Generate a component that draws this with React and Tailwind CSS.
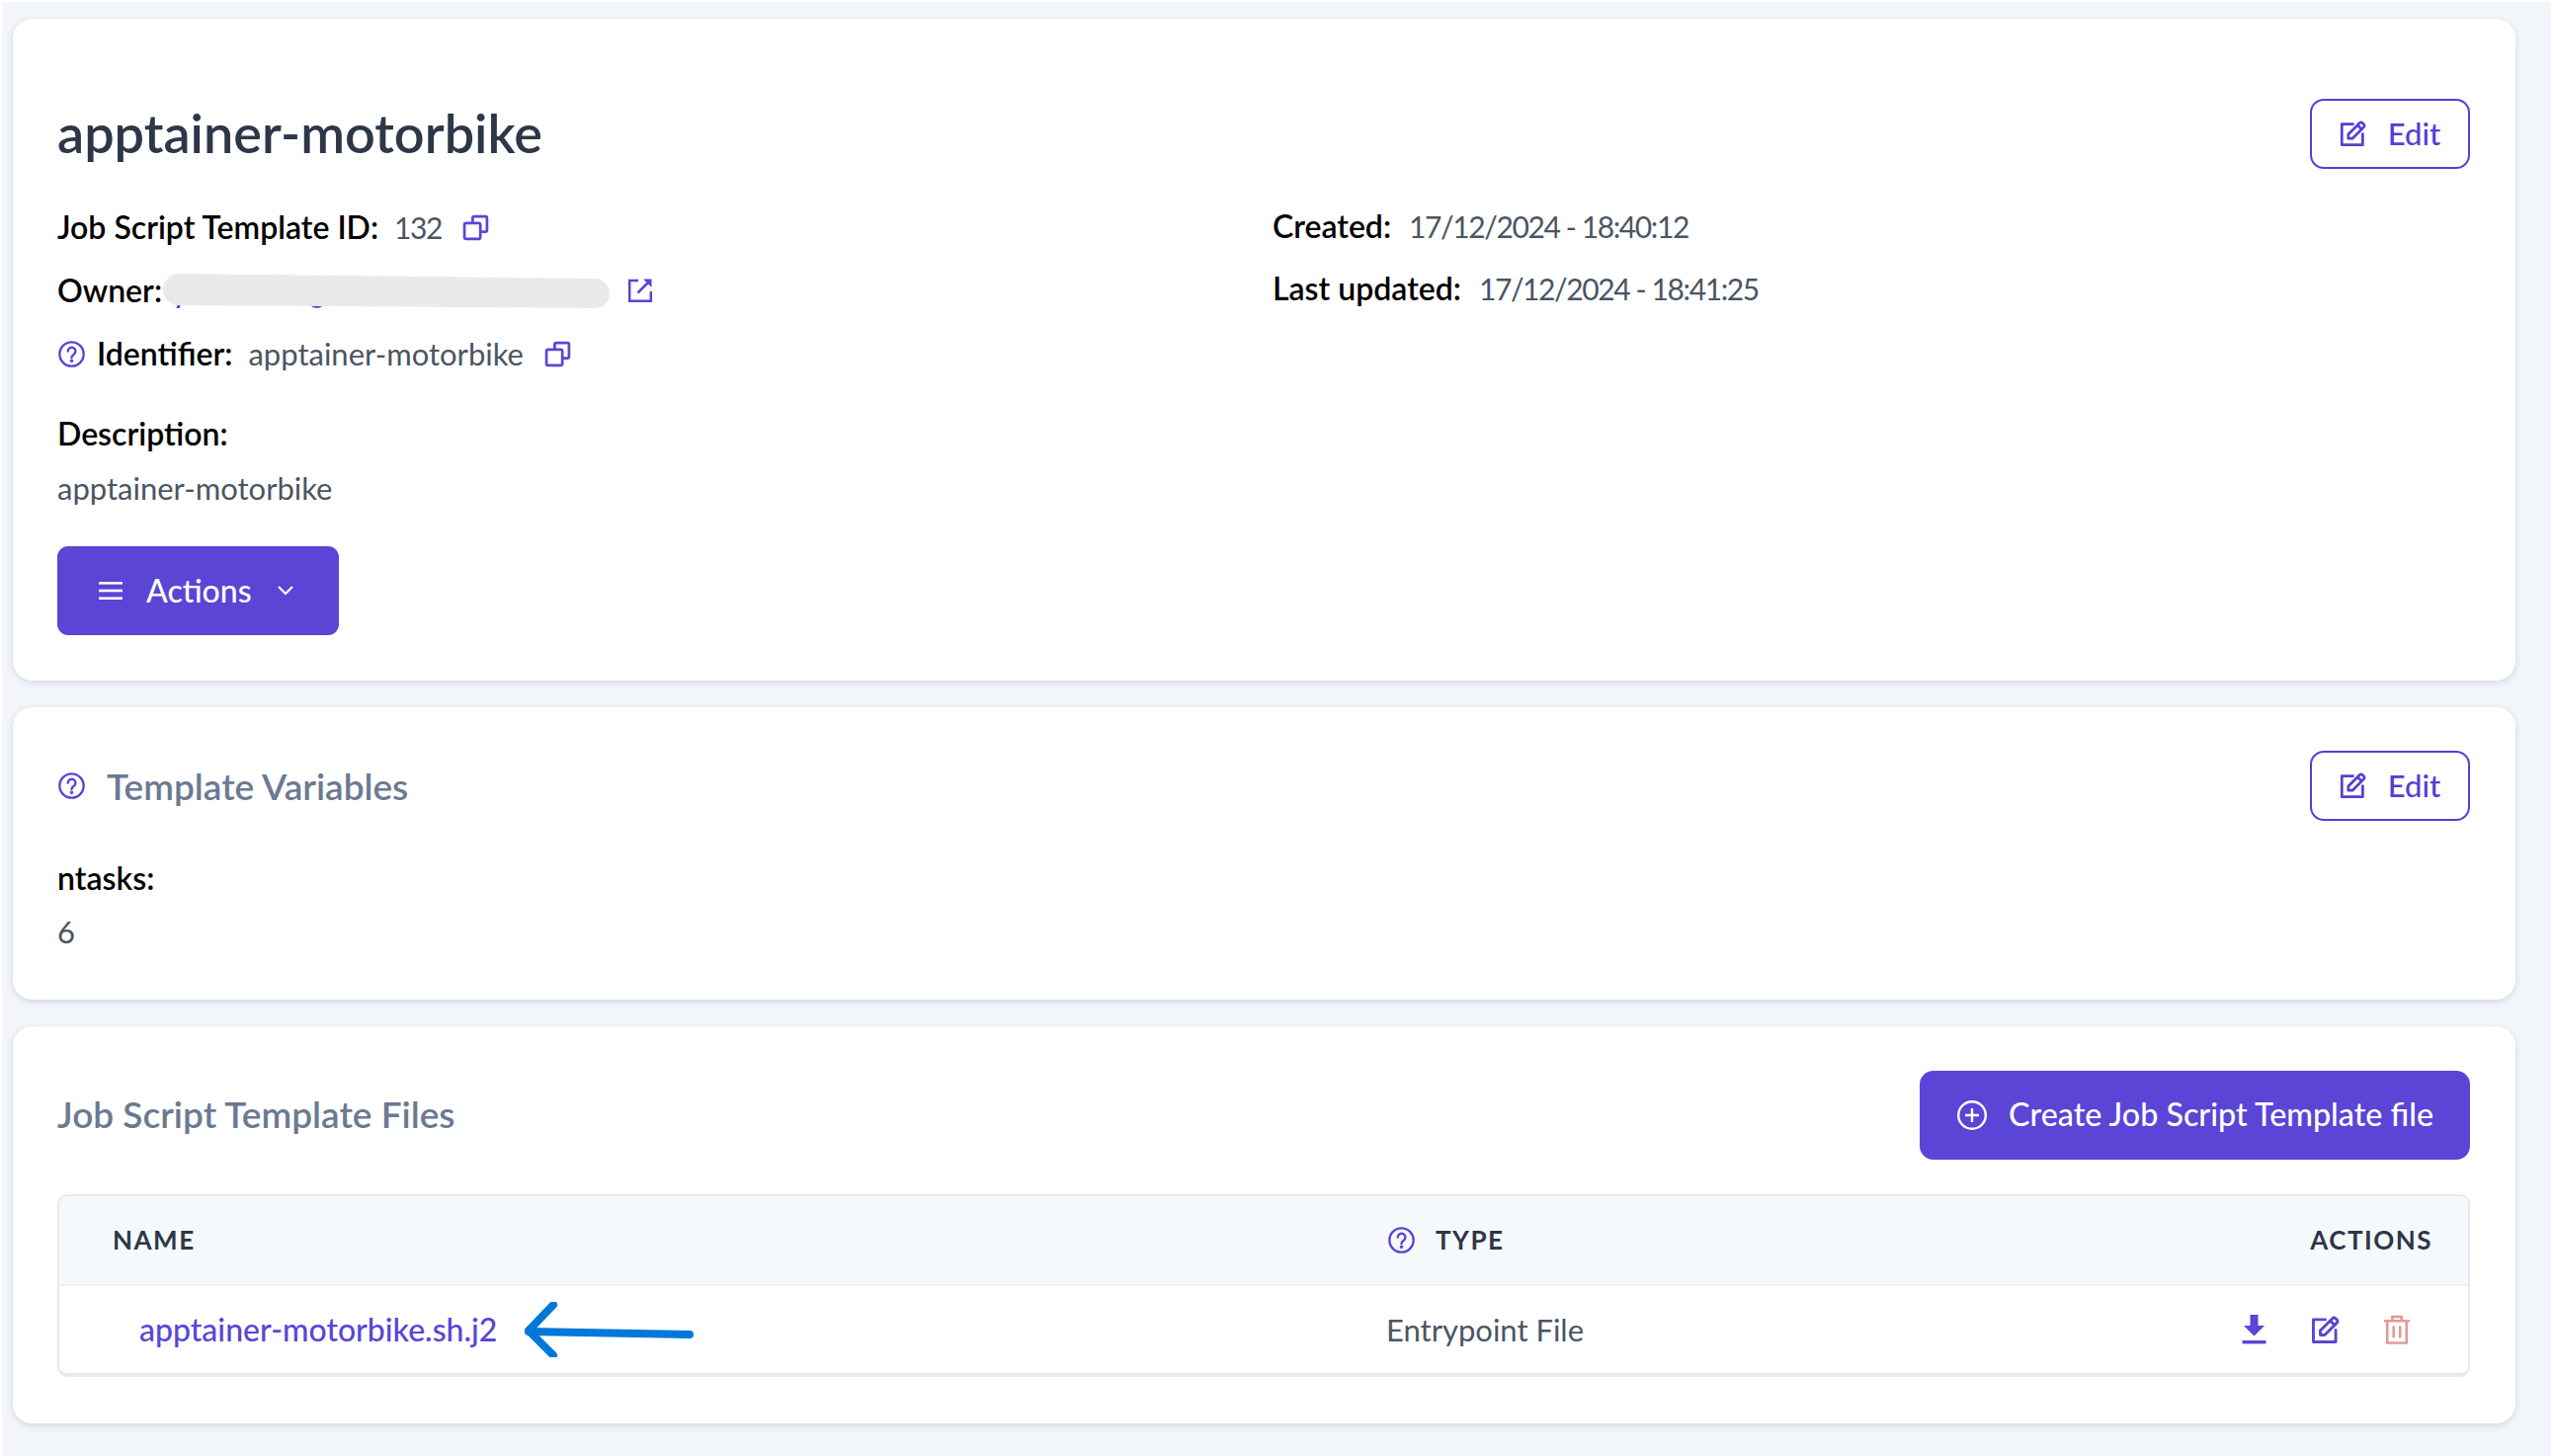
import React from 'react';

const font = { fontFamily: '"Lato", "Liberation Sans", sans-serif' };

function CopyIcon({ className }) {
  return (
    <svg viewBox="0 0 26 26" fill="none" stroke="currentColor" strokeWidth="2.6" strokeLinejoin="round" className={className}>
      <path d="M10 8V3.5A1.5 1.5 0 0 1 11.5 2h11A1.5 1.5 0 0 1 24 3.5v12a1.5 1.5 0 0 1-1.5 1.5H18" />
      <rect x="2" y="8.5" width="15.5" height="15.5" rx="1.5" />
    </svg>
  );
}

function HelpIcon({ className }) {
  return (
    <svg viewBox="0 0 26 26" fill="none" stroke="currentColor" strokeWidth="2.3" strokeLinecap="round" className={className}>
      <circle cx="13" cy="13" r="11.7" />
      <path d="M9.4 10.2a3.7 3.7 0 1 1 5.6 3.2c-1.3.8-2 1.4-2 2.9" />
      <circle cx="13" cy="19.6" r="0.6" fill="currentColor" />
    </svg>
  );
}

function EditIcon({ className }) {
  return (
    <svg viewBox="0 0 26 26" fill="none" stroke="currentColor" strokeWidth="2.6" strokeLinejoin="round" strokeLinecap="round" className={className}>
      <path d="M13 3.5H2.2v20.3h20.3V13" />
      <path d="M8.5 17.5v-4L19.6 2.4a1.9 1.9 0 0 1 2.7 0l1.3 1.3a1.9 1.9 0 0 1 0 2.7L12.5 17.5z" />
      <path d="M17.6 4.6l3.8 3.8" />
    </svg>
  );
}

function ExternalIcon({ className }) {
  return (
    <svg viewBox="0 0 26 26" fill="none" stroke="currentColor" strokeWidth="2.5" className={className}>
      <path d="M11 3H2.2v20.8H23.8V14" />
      <path d="M10.5 15.5L23 3" />
      <path d="M16 1.5h8.5V10" fill="currentColor" stroke="none" />
    </svg>
  );
}

function DownloadIcon({ className }) {
  return (
    <svg viewBox="0 0 24 30" fill="currentColor" className={className}>
      <path d="M8 0h8v11h6.5L12 21.5 1.5 11H8z" />
      <rect x="0" y="26" width="24" height="3.4" />
    </svg>
  );
}

function TrashIcon({ className }) {
  return (
    <svg viewBox="0 0 28 32" fill="none" stroke="currentColor" strokeWidth="2.8" className={className}>
      <path d="M0 6.5h28" />
      <path d="M9 6V2h10v4" />
      <path d="M3.5 6.5V30.5h21V6.5" />
      <path d="M10.5 12v13M17.5 12v13" />
    </svg>
  );
}

function EditButton() {
  return (
    <button className="flex h-[71px] w-[162px] items-center justify-center gap-[22px] rounded-[14px] border-2 border-[#5240d4] bg-white text-[31px] font-medium text-[#5240d4]">
      <EditIcon className="size-[27px]" />
      Edit
    </button>
  );
}

function Card({ className, children }) {
  return (
    <section className={`rounded-[20px] bg-white pl-[45px] pr-[46px] shadow-[0_2px_6px_rgba(100,116,139,0.22)] ${className}`}>
      {children}
    </section>
  );
}

function Field({ label, children }) {
  return (
    <div className="flex h-[64px] items-center">
      <span className="text-[32px] font-semibold text-black">{label}</span>
      {children}
    </div>
  );
}

export default function App() {
  return (
    <div className="min-h-[1474px] bg-white pl-[2px] pr-[2px] pt-[2px] text-[31px] text-[#4b5563]" style={font}>
      <div className="flex min-h-[1472px] flex-col gap-[27px] bg-[#f2f5fa] pl-[11px] pr-[36px] pt-[17px]">
        {/* details card */}
        <Card className="h-[670px] pt-[81px]">
          <div className="flex items-start justify-between">
            <h1 className="mt-[-1px] text-[54px] font-semibold leading-[72px] text-[#2d3748]">apptainer-motorbike</h1>
            <EditButton />
          </div>
          <div className="mt-[27px] grid grid-cols-2">
            <div>
              <Field label="Job Script Template ID:">
                <span className="ml-[16px] text-[30px] tracking-[-1.5px]">132</span>
                <CopyIcon className="ml-[21px] size-[27px] text-[#5a45d6]" />
              </Field>
              <Field label="Owner:">
                <span className="w-0" />
                <svg viewBox="0 0 453 36" className="ml-[1px] h-[36px] w-[453px]">
                  <path d="M16 32c0 3-1 5-3 6M150 32c2 3 8 3 10 1" fill="none" stroke="#5a45d6" strokeWidth="3" />
                  <path d="M16 1L437 6A15 15 0 0 1 437 36L16 33A16 16 0 0 1 16 1Z" fill="#eaeaea" />
                </svg>
                <ExternalIcon className="ml-[17px] size-[26px] text-[#5a45d6]" />
              </Field>
              <div className="flex h-[64px] items-center">
                <HelpIcon className="ml-[1px] size-[27px] text-[#5a45d6]" />
                <span className="ml-[12px] text-[32px] font-semibold text-black">Identifier:</span>
                <span className="ml-[16px]">apptainer-motorbike</span>
                <CopyIcon className="ml-[21px] size-[27px] text-[#5a45d6]" />
              </div>
            </div>
            <div className="-mt-[1px] pl-[9px]">
              <Field label="Created:">
                <span className="ml-[18px] text-[30px] tracking-[-1.4px]">17/12/2024 - 18:40:12</span>
              </Field>
              <div className="-mt-[1px]">
                <Field label="Last updated:">
                  <span className="ml-[18px] text-[30px] tracking-[-1.4px]">17/12/2024 - 18:41:25</span>
                </Field>
              </div>
            </div>
          </div>
          <div className="mt-[31px] text-[32px] font-semibold leading-[36px] text-black">Description:</div>
          <div className="mt-[19px] leading-[36px]">apptainer-motorbike</div>
          <button className="mt-[41px] flex h-[90px] w-[285px] items-center rounded-[11px] bg-[#5a45d6] pl-[42px] text-[32px] font-medium text-white">
            <svg viewBox="0 0 24 18" className="h-[18px] w-[24px]" fill="currentColor">
              <rect width="24" height="2.6" />
              <rect y="7.7" width="24" height="2.6" />
              <rect y="15.4" width="24" height="2.6" />
            </svg>
            <span className="ml-[24px]">Actions</span>
            <svg viewBox="0 0 16 10" fill="none" stroke="currentColor" strokeWidth="2.2" className="ml-[26px] h-[10px] w-[16px]">
              <path d="M1 1l7 7 7-7" />
            </svg>
          </button>
        </Card>

        {/* template variables */}
        <Card className="h-[296px] pt-[44px]">
          <div className="flex items-center justify-between">
            <div className="flex items-center">
              <HelpIcon className="ml-[1px] size-[27px] text-[#5a45d6]" />
              <h2 className="ml-[22px] text-[37px] font-semibold text-[#6b7a90]">Template Variables</h2>
            </div>
            <EditButton />
          </div>
          <div className="mt-[40px] text-[32px] font-semibold leading-[36px] text-black">ntasks:</div>
          <div className="mt-[18px] leading-[36px]">6</div>
        </Card>

        {/* files table */}
        <Card className="h-[402px] pt-[45px]">
          <div className="flex items-center justify-between">
            <h2 className="-mt-[2px] text-[37px] font-semibold text-[#6b7a90]">Job Script Template Files</h2>
            <button className="flex h-[90px] w-[557px] items-center rounded-[14px] bg-[#5a45d6] pl-[38px] text-[32.3px] font-medium text-white">
              <svg viewBox="0 0 30 30" fill="none" stroke="currentColor" strokeWidth="2.4" className="size-[30px]">
                <circle cx="15" cy="15" r="13.8" />
                <path d="M15 8v14M8 15h14" />
              </svg>
              <span className="-mt-[2px] ml-[22px]">Create Job Script Template file</span>
            </button>
          </div>
          <div className="mt-[35px] overflow-hidden rounded-[10px] border-2 border-b-4 border-[#e5ebf2]">
            <div className="grid h-[91px] grid-cols-[1289px_1fr_auto] items-center border-b-2 border-[#edf1f6] bg-[#f6f9fc] pl-[54px] pr-[36px] text-[26px] font-bold uppercase tracking-[1.5px] text-[#2d3748]">
              <span>Name</span>
              <span className="flex items-center pl-[2px]">
                <HelpIcon className="size-[27px] text-[#5a45d6]" />
                <span className="ml-[21px]">Type</span>
              </span>
              <span>Actions</span>
            </div>
            <div className="grid h-[88px] grid-cols-[1289px_1fr_auto] items-center pl-[54px] pr-[59px]">
              <span className="flex items-center pl-[27px]">
                <span className="text-[32px] font-medium text-[#5a45d6]">apptainer-motorbike.sh.j2</span>
                <svg viewBox="0 0 172 56" fill="none" stroke="#0078d7" strokeLinecap="round" strokeLinejoin="round" className="ml-[27px] h-[56px] w-[172px]">
                  <path d="M5 30L168 33" strokeWidth="8" />
                  <path d="M30 3L5 29l25 25" strokeWidth="8" />
                </svg>
              </span>
              <span>Entrypoint File</span>
              <span className="flex items-center gap-[45px]">
                <DownloadIcon className="h-[30px] w-[25px] text-[#5a45d6]" />
                <EditIcon className="size-[29px] text-[#5a45d6]" />
                <TrashIcon className="h-[30px] w-[26px] text-[#e39a9a]" />
              </span>
            </div>
          </div>
        </Card>
      </div>
    </div>
  );
}
